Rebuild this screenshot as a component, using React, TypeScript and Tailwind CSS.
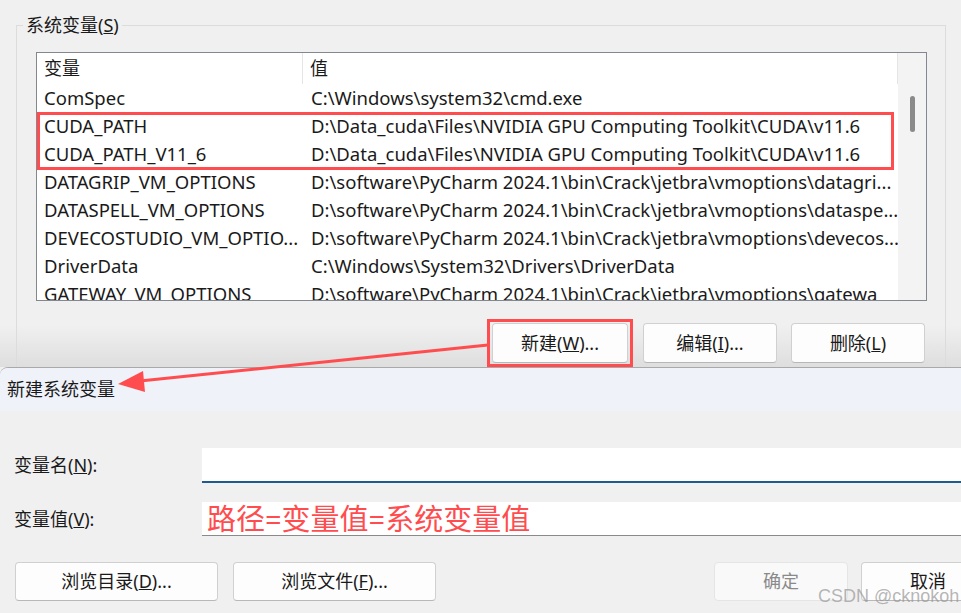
import React from "react";

const rows: [string, string][] = [
  ["ComSpec", "C:\\Windows\\system32\\cmd.exe"],
  ["CUDA_PATH", "D:\\Data_cuda\\Files\\NVIDIA GPU Computing Toolkit\\CUDA\\v11.6"],
  ["CUDA_PATH_V11_6", "D:\\Data_cuda\\Files\\NVIDIA GPU Computing Toolkit\\CUDA\\v11.6"],
  ["DATAGRIP_VM_OPTIONS", "D:\\software\\PyCharm 2024.1\\bin\\Crack\\jetbra\\vmoptions\\datagri..."],
  ["DATASPELL_VM_OPTIONS", "D:\\software\\PyCharm 2024.1\\bin\\Crack\\jetbra\\vmoptions\\dataspe..."],
  ["DEVECOSTUDIO_VM_OPTIO...", "D:\\software\\PyCharm 2024.1\\bin\\Crack\\jetbra\\vmoptions\\devecos..."],
  ["DriverData", "C:\\Windows\\System32\\Drivers\\DriverData"],
  ["GATEWAY_VM_OPTIONS", "D:\\software\\PyCharm 2024.1\\bin\\Crack\\jetbra\\vmoptions\\gatewa"],
];

const font = "font-['Noto_Sans','Noto_Sans_CJK_SC',sans-serif]";

function WinButton({ children, className = "", disabled = false }: { children: React.ReactNode; className?: string; disabled?: boolean }) {
  return (
    <div
      className={`flex shrink-0 items-center justify-center rounded-[4px] border text-[18px] ${
        disabled
          ? "border-[#e5e5e5] bg-[#f9f9f9] text-[#8a8a8a]"
          : "border-[#d0d0d0] border-b-[#b8b8b8] bg-[#fdfdfd] text-[#1a1a1a]"
      } ${className}`}
    >
      {children}
    </div>
  );
}

export default function App() {
  return (
    <div className={`relative flex h-[613px] w-[961px] flex-col overflow-hidden bg-[#f0f0f0] ${font} text-[#1a1a1a]`}>
      {/* Upper window */}
      <div className="flex h-[367px] shrink-0 flex-col bg-[linear-gradient(to_bottom,#f0f0f0_0px,#f0f0f0_325px,#dedede_367px)] pl-[16px] pt-[25px]">
        <div className="relative flex w-[930px] flex-1 flex-col border-l border-r border-t border-[#dcdcdc] pl-[19px] pt-[26px]">
          <div className="absolute left-[6px] top-[-14px] bg-[#f0f0f0] px-[3px] text-[18px] leading-[26px]">
            系统变量(<u>S</u>)
          </div>
          {/* List */}
          <div className="relative flex h-[249px] w-[891px] shrink-0 overflow-hidden border border-[#828790] bg-white">
            <div className="flex w-[861px] flex-col">
              <div className="flex h-[31px] shrink-0 items-center text-[18px]">
                <div className="flex h-full w-[266px] items-center border-r border-[#e5e5e5] pl-[7px]">变量</div>
                <div className="flex h-full flex-1 items-center border-r border-[#e5e5e5] pl-[7px]">值</div>
              </div>
              {rows.map(([n, v], i) => (
                <div key={i} className="flex h-[28px] shrink-0 items-center whitespace-nowrap text-[18.5px]">
                  <div className="w-[266px] overflow-hidden pl-[7px]">{n}</div>
                  <div className="flex-1 overflow-hidden pl-[8px]">{v}</div>
                </div>
              ))}
            </div>
            <div className="flex w-[28px] shrink-0 justify-center bg-[#f3f3f3] pt-[43px]">
              <div className="h-[36px] w-[5px] rounded-full bg-[#8a8a8a]" />
            </div>
            <div className="pointer-events-none absolute left-[0px] top-[59px] h-[58px] w-[857px] border-[3px] border-[#ff4d4f]" />
          </div>
          {/* Buttons */}
          <div className="mt-[18px] flex w-[891px] justify-end">
            <div className="shrink-0 border-[3px] border-[#ff4d4f] px-[2px] py-[1px]">
              <WinButton className="h-[40px] w-[136px]">
                新建(<u>W</u>)...
              </WinButton>
            </div>
            <WinButton className="ml-[10px] mt-[4px] h-[40px] w-[134px]">
              编辑(<u>I</u>)...
            </WinButton>
            <WinButton className="ml-[14px] mr-[2px] mt-[4px] h-[40px] w-[134px]">
              删除(<u>L</u>)
            </WinButton>
          </div>
        </div>
      </div>

      {/* New system variable dialog */}
      <div className="flex flex-1 flex-col overflow-hidden rounded-tl-[8px] border-t border-[#a9a9a9] bg-[#f0f0f0]">
        <div className="flex h-[43px] shrink-0 items-center bg-[#eff2f9] pl-[7px] text-[18px]">新建系统变量</div>
        <div className="flex flex-col pl-[14px] pt-[37px]">
          <div className="flex h-[35px] items-center">
            <div className="w-[188px] shrink-0 text-[18px]">
              变量名(<u>N</u>):
            </div>
            <div className="h-[35px] flex-1 border-b-2 border-[#1d5b8e] bg-white" />
          </div>
          <div className="mt-[19px] flex h-[34px] items-center">
            <div className="w-[188px] shrink-0 text-[18px]">
              变量值(<u>V</u>):
            </div>
            <div className="flex h-[34px] flex-1 items-center border-b border-[#8a8a8a] bg-white pl-[5px] text-[29px] leading-none text-[#ff4d4f]">
              路径=变量值=系统变量值
            </div>
          </div>
          <div className="mt-[26px] flex items-center">
            <WinButton className="ml-[1px] h-[39px] w-[203px]">
              浏览目录(<u>D</u>)...
            </WinButton>
            <WinButton className="ml-[15px] h-[39px] w-[203px]">
              浏览文件(<u>F</u>)...
            </WinButton>
            <WinButton disabled className="ml-[278px] h-[39px] w-[134px]">
              确定
            </WinButton>
            <WinButton className="ml-[13px] h-[39px] w-[134px]">
              取消
            </WinButton>
          </div>
        </div>
      </div>

      {/* Annotation arrow */}
      <svg className="pointer-events-none absolute left-0 top-0" width="961" height="613">
        <line x1="488" y1="345" x2="140" y2="381" stroke="#ff4d4f" strokeWidth="3" />
        <polygon points="118,384 143,371 145,392" fill="#ff4d4f" />
      </svg>

      {/* Watermark */}
      <div className="pointer-events-none absolute left-[818px] top-[583px] font-['Liberation_Sans',sans-serif] text-[18px] text-[rgba(150,150,150,0.7)]">
        CSDN @cknokoh
      </div>
    </div>
  );
}
